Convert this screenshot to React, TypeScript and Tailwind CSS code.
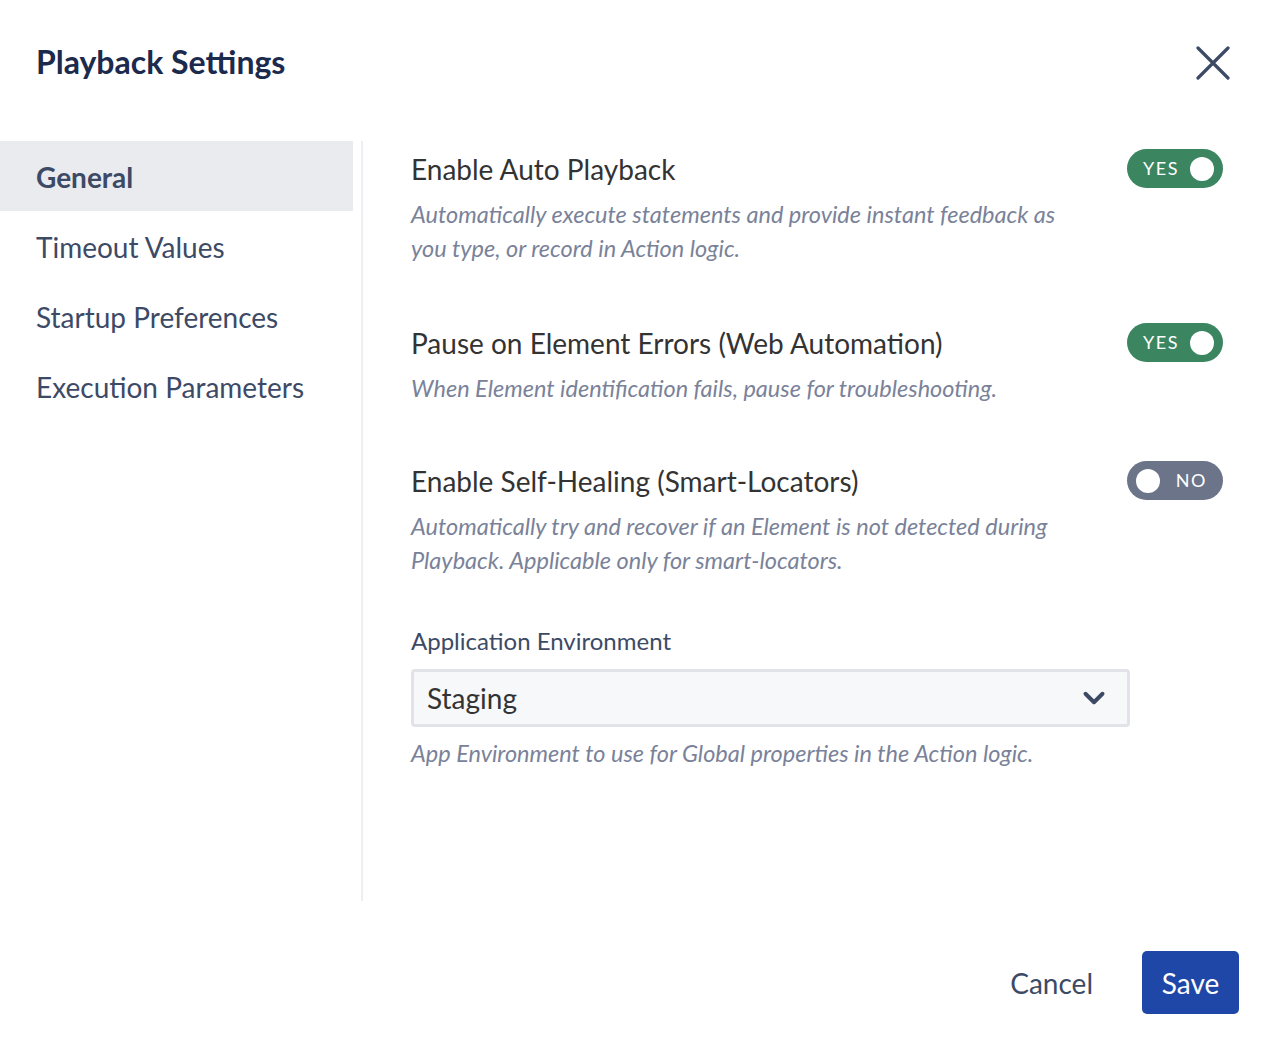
import { ChevronDown } from 'lucide-react';

type Setting = {
  title: string;
  description: string;
  enabled: boolean;
};

const navItems = ['General', 'Timeout Values', 'Startup Preferences', 'Execution Parameters'];

const settings: Setting[] = [
  {
    title: 'Enable Auto Playback',
    description:
      'Automatically execute statements and provide instant feedback as you type, or record in Action logic.',
    enabled: true,
  },
  {
    title: 'Pause on Element Errors (Web Automation)',
    description: 'When Element identification fails, pause for troubleshooting.',
    enabled: true,
  },
  {
    title: 'Enable Self-Healing (Smart-Locators)',
    description:
      'Automatically try and recover if an Element is not detected during Playback. Applicable only for smart-locators.',
    enabled: false,
  },
];

function Toggle({ on }: { on: boolean }) {
  return on ? (
    <div className="flex h-[39px] w-[96px] shrink-0 items-center justify-between rounded-full bg-[#3b8660] pl-[16px] pr-[9px]">
      <span className="text-[18px] tracking-[1.5px] text-white">YES</span>
      <span className="h-[24px] w-[24px] rounded-full bg-white" />
    </div>
  ) : (
    <div className="flex h-[39px] w-[96px] shrink-0 items-center justify-between rounded-full bg-[#6b7489] pl-[9px] pr-[16px]">
      <span className="h-[24px] w-[24px] rounded-full bg-white" />
      <span className="text-[18px] tracking-[1.5px] text-white">NO</span>
    </div>
  );
}

export default function App() {
  return (
    <div className="flex h-[1046px] w-full flex-col bg-white font-['Lato','Noto_Sans',sans-serif]">
      {/* header */}
      <div className="flex h-[141px] items-start justify-between pl-[36px] pr-[42px] pt-[42px]">
        <h1 className="text-[32px] font-bold leading-[40px] text-[#1c2a4d]">Playback Settings</h1>
        <button className="mt-[4px] text-[#3d4a66]">
          <svg width="34" height="34" viewBox="0 0 34 34" fill="none">
            <path d="M2 2L32 32M32 2L2 32" stroke="currentColor" strokeWidth="3.2" strokeLinecap="round" />
          </svg>
        </button>
      </div>

      {/* body */}
      <div className="flex h-[760px]">
        <nav className="flex w-[353px] flex-col">
          {navItems.map((item, i) => (
            <div
              key={item}
              className={
                i === 0
                  ? 'flex h-[70px] items-center bg-[#e9ebef] pl-[36px] pt-[2px] text-[28px] font-bold text-[#3d4a66]'
                  : 'flex h-[70px] items-center pl-[36px] pt-[2px] text-[28px] text-[#3d4a66]'
              }
            >
              {item}
            </div>
          ))}
        </nav>
        <div className="ml-[8px] w-[2px] bg-[#eceef1]" />

        <div className="flex flex-1 flex-col pl-[48px] pr-[49px] pt-[8px]">
          {settings.map((s, i) => (
            <div
              key={s.title}
              className={i === 0 ? 'flex flex-col' : i === 1 ? 'mt-[58px] flex flex-col' : 'mt-[56px] flex flex-col'}
            >
              <div className="flex items-center justify-between">
                <h3 className="text-[28px] leading-[36px] text-[#333333]">{s.title}</h3>
                <Toggle on={s.enabled} />
              </div>
              <p className="mt-[9px] max-w-[660px] text-[23.5px] italic leading-[34px] text-[#7a8299]">
                {s.description}
              </p>
            </div>
          ))}

          <label className="mt-[49px] text-[24px] leading-[30px] text-[#3d4a66]">Application Environment</label>
          <div className="mt-[13px] flex h-[58px] w-[719px] items-center justify-between rounded-[4px] border-[3px] border-[#e1e3e8] bg-[#f7f8fa] pl-[13px] pr-[16px]">
            <span className="text-[28px] text-[#333333]">Staging</span>
            <ChevronDown className="h-[34px] w-[34px] text-[#3d4a66]" strokeWidth={2.8} />
          </div>
          <p className="mt-[9px] text-[23.5px] italic leading-[34px] text-[#7a8299]">
            App Environment to use for Global properties in the Action logic.
          </p>
        </div>
      </div>

      {/* footer */}
      <div className="flex items-center justify-end gap-[49px] pr-[33px] pt-[50px]">
        <button className="text-[28px] text-[#3d4a66]">Cancel</button>
        <button className="flex h-[63px] w-[97px] items-center justify-center rounded-[5px] bg-[#1e47a7] text-[28px] text-white">
          Save
        </button>
      </div>
    </div>
  );
}
